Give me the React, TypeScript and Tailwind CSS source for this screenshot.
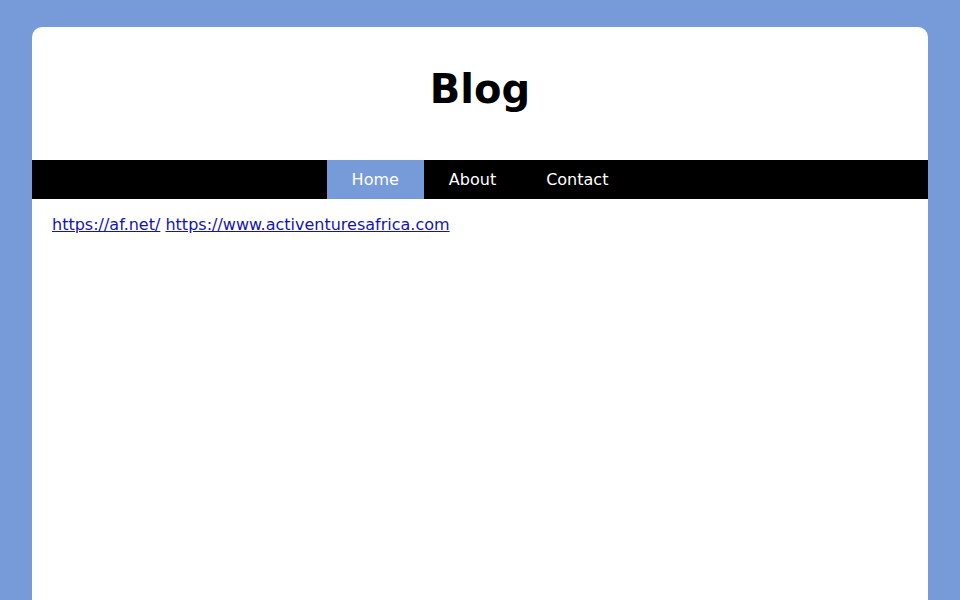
export default function App() {
  return (
    <div
      className="min-h-[600px] bg-[#779bd8] px-8 pt-[27px]"
      style={{ fontFamily: '"DejaVu Sans", sans-serif' }}
    >
      <div className="min-h-[573px] rounded-t-[10px] bg-white">
        <header className="pt-[39px] pb-[48px] text-center">
          <h1 className="text-[40px] font-bold leading-[46px] text-black">Blog</h1>
        </header>
        <nav className="flex justify-center bg-black">
          <a className="block bg-[#779bd8] px-[25px] py-[10px] text-[16px] leading-[19px] text-white">Home</a>
          <a className="block px-[25px] py-[10px] text-[16px] leading-[19px] text-white">About</a>
          <a className="block px-[25px] py-[10px] text-[16px] leading-[19px] text-white">Contact</a>
        </nav>
        <main className="px-5 pt-[16px]">
          <p className="text-[16px] leading-[normal]">
            <a href="#" className="text-[#1414b0] underline">https://af.net/</a>{" "}
            <a href="#" className="text-[#1414b0] underline">https://www.activenturesafrica.com</a>
          </p>
        </main>
      </div>
    </div>
  );
}
